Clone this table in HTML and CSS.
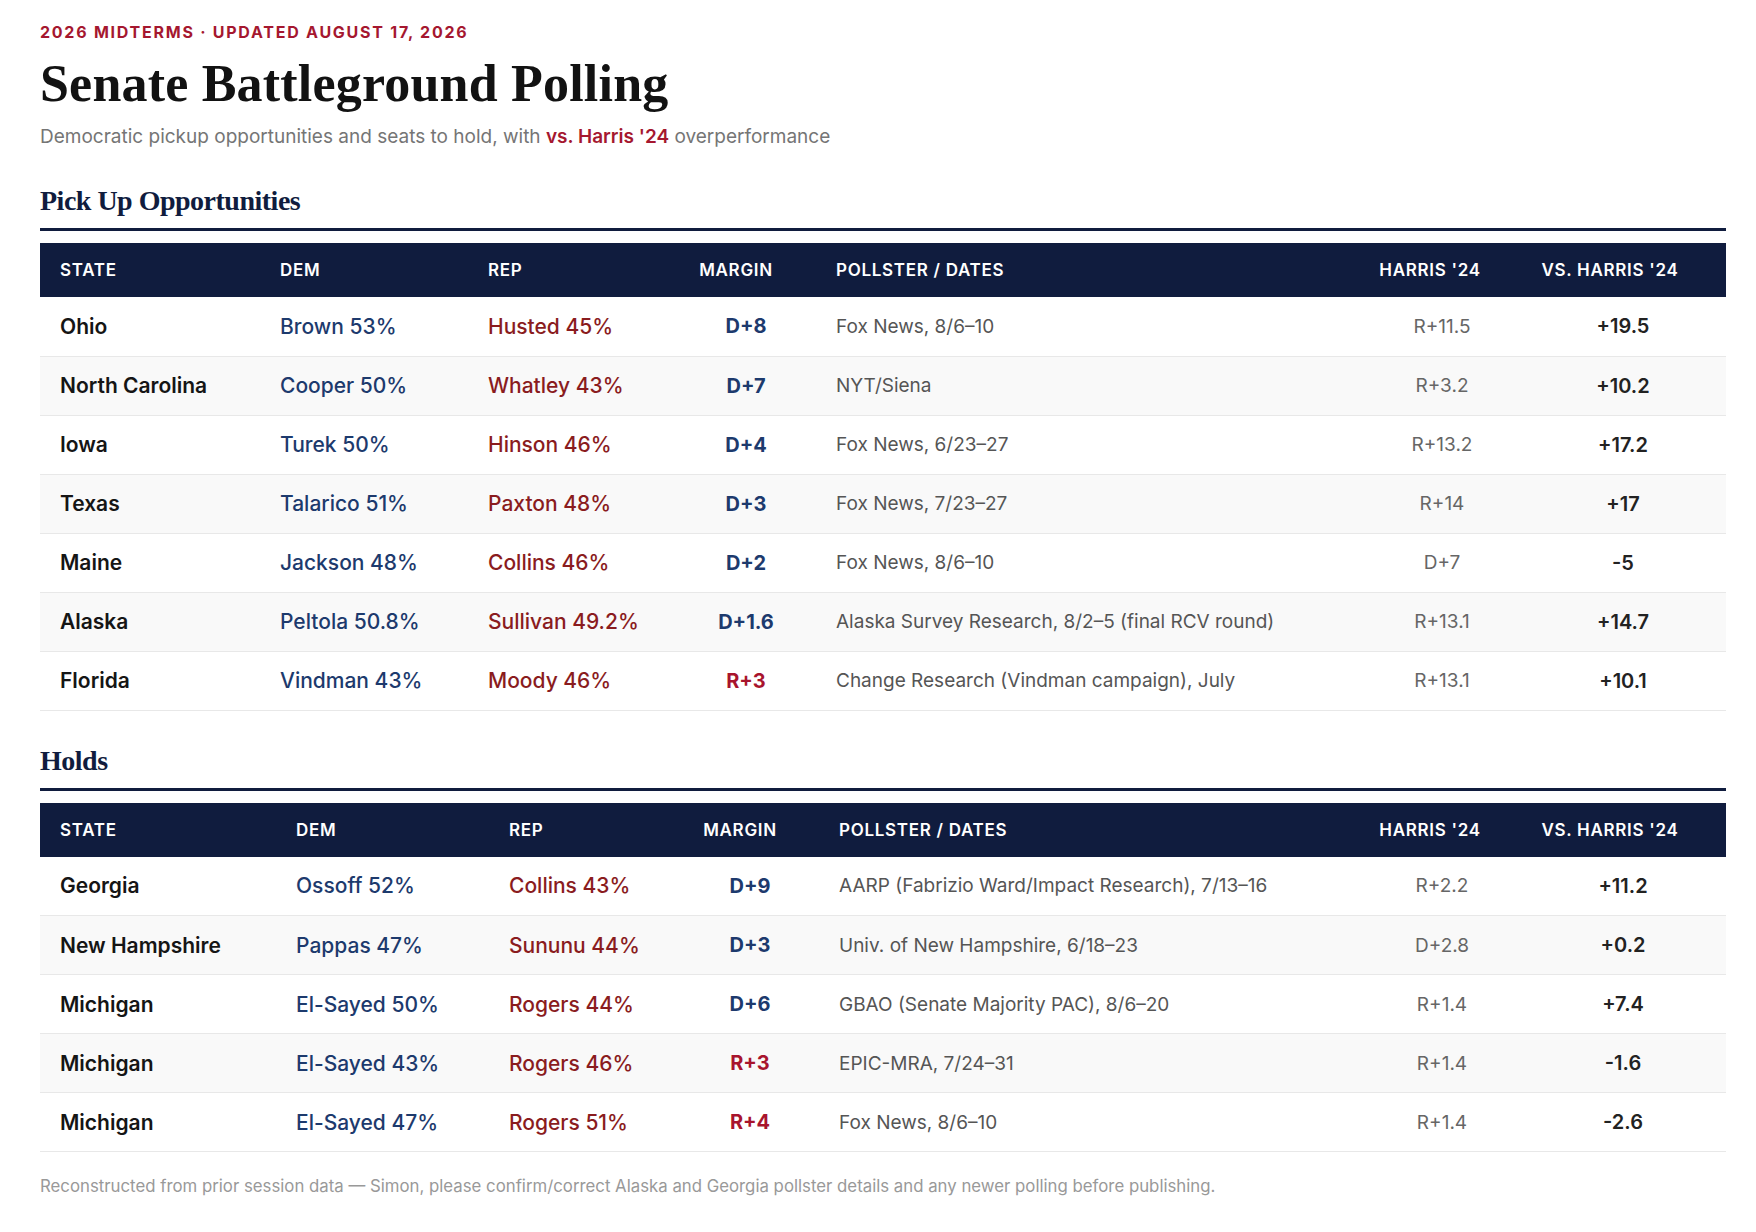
FILE: index.html
```html
<!DOCTYPE html>
<html lang="en">
<head>
<meta charset="utf-8">
<title>Senate Battleground Polling</title>
<link rel="stylesheet" href="styles.css">
</head>
<body>
<main class="page">
  <header class="masthead">
    <p class="eyebrow">2026 Midterms · Updated August 17, 2026</p>
    <h1 class="title">Senate Battleground Polling</h1>
    <p class="dek">Democratic pickup opportunities and seats to hold, with <strong>vs. Harris '24</strong> overperformance</p>
  </header>

  <section class="block">
    <h2 class="block-title">Pick Up Opportunities</h2>
    <table class="polls">
      <colgroup>
        <col class="w-220"><col class="w-208"><col class="w-208"><col class="w-140"><col class="w-562"><col class="w-142"><col class="w-206">
      </colgroup>
      <thead>
        <tr>
          <th>State</th><th>Dem</th><th>Rep</th><th class="c-margin">Margin</th><th>Pollster / Dates</th><th class="c-harris">Harris '24</th><th class="c-vs">vs. Harris '24</th>
        </tr>
      </thead>
      <tbody>
        <tr><td class="state">Ohio</td><td class="dem">Brown 53%</td><td class="rep">Husted 45%</td><td class="m d">D+8</td><td class="src">Fox News, 8/6–10</td><td class="h">R+11.5</td><td class="vs">+19.5</td></tr>
        <tr><td class="state">North Carolina</td><td class="dem">Cooper 50%</td><td class="rep">Whatley 43%</td><td class="m d">D+7</td><td class="src">NYT/Siena</td><td class="h">R+3.2</td><td class="vs">+10.2</td></tr>
        <tr><td class="state">Iowa</td><td class="dem">Turek 50%</td><td class="rep">Hinson 46%</td><td class="m d">D+4</td><td class="src">Fox News, 6/23–27</td><td class="h">R+13.2</td><td class="vs">+17.2</td></tr>
        <tr><td class="state">Texas</td><td class="dem">Talarico 51%</td><td class="rep">Paxton 48%</td><td class="m d">D+3</td><td class="src">Fox News, 7/23–27</td><td class="h">R+14</td><td class="vs">+17</td></tr>
        <tr><td class="state">Maine</td><td class="dem">Jackson 48%</td><td class="rep">Collins 46%</td><td class="m d">D+2</td><td class="src">Fox News, 8/6–10</td><td class="h">D+7</td><td class="vs">-5</td></tr>
        <tr><td class="state">Alaska</td><td class="dem">Peltola 50.8%</td><td class="rep">Sullivan 49.2%</td><td class="m d">D+1.6</td><td class="src">Alaska Survey Research, 8/2–5 (final RCV round)</td><td class="h">R+13.1</td><td class="vs">+14.7</td></tr>
        <tr><td class="state">Florida</td><td class="dem">Vindman 43%</td><td class="rep">Moody 46%</td><td class="m r">R+3</td><td class="src">Change Research (Vindman campaign), July</td><td class="h">R+13.1</td><td class="vs">+10.1</td></tr>
      </tbody>
    </table>
  </section>

  <section class="block">
    <h2 class="block-title">Holds</h2>
    <table class="polls">
      <colgroup>
        <col class="w-236"><col class="w-213"><col class="w-192"><col class="w-138"><col class="w-559"><col class="w-142"><col class="w-206">
      </colgroup>
      <thead>
        <tr>
          <th>State</th><th>Dem</th><th>Rep</th><th class="c-margin">Margin</th><th>Pollster / Dates</th><th class="c-harris">Harris '24</th><th class="c-vs">vs. Harris '24</th>
        </tr>
      </thead>
      <tbody>
        <tr><td class="state">Georgia</td><td class="dem">Ossoff 52%</td><td class="rep">Collins 43%</td><td class="m d">D+9</td><td class="src">AARP (Fabrizio Ward/Impact Research), 7/13–16</td><td class="h">R+2.2</td><td class="vs">+11.2</td></tr>
        <tr><td class="state">New Hampshire</td><td class="dem">Pappas 47%</td><td class="rep">Sununu 44%</td><td class="m d">D+3</td><td class="src">Univ. of New Hampshire, 6/18–23</td><td class="h">D+2.8</td><td class="vs">+0.2</td></tr>
        <tr><td class="state">Michigan</td><td class="dem">El-Sayed 50%</td><td class="rep">Rogers 44%</td><td class="m d">D+6</td><td class="src">GBAO (Senate Majority PAC), 8/6–20</td><td class="h">R+1.4</td><td class="vs">+7.4</td></tr>
        <tr><td class="state">Michigan</td><td class="dem">El-Sayed 43%</td><td class="rep">Rogers 46%</td><td class="m r">R+3</td><td class="src">EPIC-MRA, 7/24–31</td><td class="h">R+1.4</td><td class="vs">-1.6</td></tr>
        <tr><td class="state">Michigan</td><td class="dem">El-Sayed 47%</td><td class="rep">Rogers 51%</td><td class="m r">R+4</td><td class="src">Fox News, 8/6–10</td><td class="h">R+1.4</td><td class="vs">-2.6</td></tr>
      </tbody>
    </table>
  </section>

  <p class="footnote">Reconstructed from prior session data — Simon, please confirm/correct Alaska and Georgia pollster details and any newer polling before publishing.</p>
</main>
</body>
</html>
```

FILE: styles.css
```css
* { box-sizing: border-box; }

html, body {
  margin: 0;
  padding: 0;
  background: #ffffff;
}

body {
  font-family: "Inter", "Liberation Sans", sans-serif;
  color: #1a1a1a;
}

.page {
  padding: 22px 30px 10px 40px;
}

.eyebrow {
  margin: 0;
  font-size: 16px;
  line-height: 20px;
  font-weight: 700;
  letter-spacing: 1.75px;
  text-transform: uppercase;
  color: #a5172f;
}

.title {
  margin: 12px 0 0;
  font-family: "Liberation Serif", "Times New Roman", serif;
  font-size: 52px;
  line-height: 60px;
  font-weight: 700;
  letter-spacing: 0.2px;
  color: #121212;
}

.dek {
  margin: 10px 0 0;
  font-size: 19px;
  line-height: 26px;
  color: #757575;
}

.dek strong {
  font-weight: 600;
  color: #a5172f;
}

.block {
  margin-top: 33px;
}

.block + .block {
  margin-top: 32px;
}

.block-title {
  margin: 0;
  padding-bottom: 9px;
  border-bottom: 3px solid #101c3e;
  font-family: "Liberation Serif", "Times New Roman", serif;
  font-size: 28px;
  line-height: 36px;
  font-weight: 700;
  letter-spacing: -0.5px;
  color: #101c3e;
}

.polls {
  width: 100%;
  margin-top: 12px;
  border-collapse: collapse;
  table-layout: fixed;
}

.w-220 { width: 220px; }
.w-208 { width: 208px; }
.w-140 { width: 140px; }
.w-562 { width: 562px; }
.w-142 { width: 142px; }
.w-206 { width: 206px; }
.w-236 { width: 236px; }
.w-213 { width: 213px; }
.w-192 { width: 192px; }
.w-138 { width: 138px; }
.w-559 { width: 559px; }

.polls thead tr {
  background: #101c3e;
}

.polls th {
  height: 54px;
  padding: 0 20px;
  text-align: left;
  font-size: 17px;
  font-weight: 600;
  letter-spacing: 0.7px;
  text-transform: uppercase;
  color: #ffffff;
  white-space: nowrap;
}

.polls th.c-margin { text-align: center; padding: 0 20px 0 0; }
.polls th.c-harris { text-align: center; padding: 0 38px 0 0; }
.polls th.c-vs { text-align: center; padding: 0 26px 0 0; }

.polls td {
  height: 59px;
  padding: 0 20px;
  border-bottom: 1px solid #e8e8e8;
  font-size: 21px;
  white-space: nowrap;
}

.polls tbody tr:nth-child(even) {
  background: #f9f9f9;
}

.state { font-weight: 600; color: #151515; }
.dem { font-weight: 500; color: #1d3a6d; }
.rep { font-weight: 500; color: #8a1c1e; }
.polls td.m { text-align: center; font-size: 20px; font-weight: 700; }
.m.d { color: #1d3a6d; }
.m.r { color: #a8142d; }
.polls td.src { font-size: 19px; color: #555555; }
.polls td.h { text-align: center; padding: 0 34px 0 20px; font-size: 19px; color: #666666; }
.polls td.vs { text-align: center; font-size: 20px; font-weight: 600; color: #222222; }

.footnote {
  margin: 23px 0 0;
  font-size: 16.8px;
  line-height: 22px;
  color: #999999;
}
```
